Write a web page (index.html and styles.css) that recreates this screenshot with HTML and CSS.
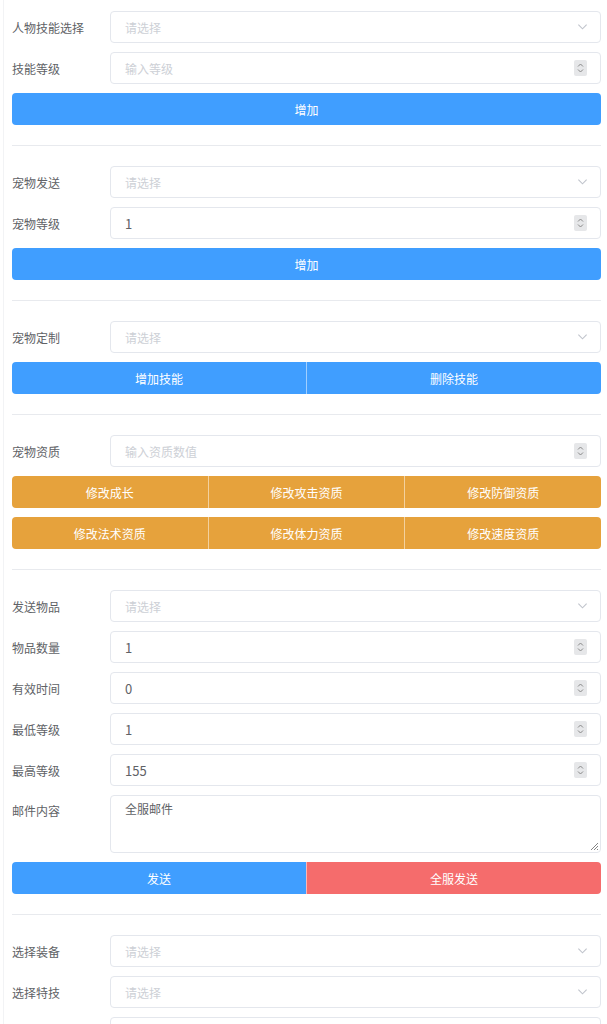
FILE: index.html
```html
<!DOCTYPE html>
<html lang="zh">
<head>
<meta charset="utf-8">
<link rel="stylesheet" href="styles.css">
</head>
<body>
<div class="page">
  <section class="sec">
    <div class="row"><label class="lbl">人物技能选择</label><div class="field select"><span class="ph">请选择</span><svg class="arrow" viewBox="0 0 12 8"><path d="M1.5 1.5 6 6l4.5-4.5" fill="none" stroke="#c0c4cc" stroke-width="1.2"/></svg></div></div>
    <div class="row"><label class="lbl">技能等级</label><div class="field num"><span class="ph">输入等级</span><span class="spin"><svg viewBox="0 0 12 16"><path d="M3.5 6.5 6 4l2.5 2.5M3.5 9.5 6 12l2.5-2.5" fill="none" stroke="#888" stroke-width="1"/></svg></span></div></div>
    <div class="btns"><button class="btn blue">增加</button></div>
  </section>
  <hr class="div">
  <section class="sec">
    <div class="row"><label class="lbl">宠物发送</label><div class="field select"><span class="ph">请选择</span><svg class="arrow" viewBox="0 0 12 8"><path d="M1.5 1.5 6 6l4.5-4.5" fill="none" stroke="#c0c4cc" stroke-width="1.2"/></svg></div></div>
    <div class="row"><label class="lbl">宠物等级</label><div class="field num"><span class="val">1</span><span class="spin"><svg viewBox="0 0 12 16"><path d="M3.5 6.5 6 4l2.5 2.5M3.5 9.5 6 12l2.5-2.5" fill="none" stroke="#888" stroke-width="1"/></svg></span></div></div>
    <div class="btns"><button class="btn blue">增加</button></div>
  </section>
  <hr class="div">
  <section class="sec">
    <div class="row"><label class="lbl">宠物定制</label><div class="field select"><span class="ph">请选择</span><svg class="arrow" viewBox="0 0 12 8"><path d="M1.5 1.5 6 6l4.5-4.5" fill="none" stroke="#c0c4cc" stroke-width="1.2"/></svg></div></div>
    <div class="btns group"><button class="btn blue">增加技能</button><button class="btn blue">删除技能</button></div>
  </section>
  <hr class="div">
  <section class="sec">
    <div class="row"><label class="lbl">宠物资质</label><div class="field num"><span class="ph">输入资质数值</span><span class="spin"><svg viewBox="0 0 12 16"><path d="M3.5 6.5 6 4l2.5 2.5M3.5 9.5 6 12l2.5-2.5" fill="none" stroke="#888" stroke-width="1"/></svg></span></div></div>
    <div class="btns group"><button class="btn orange">修改成长</button><button class="btn orange">修改攻击资质</button><button class="btn orange">修改防御资质</button></div>
    <div class="btns group"><button class="btn orange">修改法术资质</button><button class="btn orange">修改体力资质</button><button class="btn orange">修改速度资质</button></div>
  </section>
  <hr class="div">
  <section class="sec">
    <div class="row"><label class="lbl">发送物品</label><div class="field select"><span class="ph">请选择</span><svg class="arrow" viewBox="0 0 12 8"><path d="M1.5 1.5 6 6l4.5-4.5" fill="none" stroke="#c0c4cc" stroke-width="1.2"/></svg></div></div>
    <div class="row"><label class="lbl">物品数量</label><div class="field num"><span class="val">1</span><span class="spin"><svg viewBox="0 0 12 16"><path d="M3.5 6.5 6 4l2.5 2.5M3.5 9.5 6 12l2.5-2.5" fill="none" stroke="#888" stroke-width="1"/></svg></span></div></div>
    <div class="row"><label class="lbl">有效时间</label><div class="field num"><span class="val">0</span><span class="spin"><svg viewBox="0 0 12 16"><path d="M3.5 6.5 6 4l2.5 2.5M3.5 9.5 6 12l2.5-2.5" fill="none" stroke="#888" stroke-width="1"/></svg></span></div></div>
    <div class="row"><label class="lbl">最低等级</label><div class="field num"><span class="val">1</span><span class="spin"><svg viewBox="0 0 12 16"><path d="M3.5 6.5 6 4l2.5 2.5M3.5 9.5 6 12l2.5-2.5" fill="none" stroke="#888" stroke-width="1"/></svg></span></div></div>
    <div class="row"><label class="lbl">最高等级</label><div class="field num"><span class="val">155</span><span class="spin"><svg viewBox="0 0 12 16"><path d="M3.5 6.5 6 4l2.5 2.5M3.5 9.5 6 12l2.5-2.5" fill="none" stroke="#888" stroke-width="1"/></svg></span></div></div>
    <div class="row top"><label class="lbl">邮件内容</label><div class="field area"><span class="val">全服邮件</span><svg class="grip" viewBox="0 0 10 10"><path d="M9 2 2 9M9 5 5 9M9 8 8 9" stroke="#777" stroke-width="0.9"/></svg></div></div>
    <div class="btns group"><button class="btn blue">发送</button><button class="btn red">全服发送</button></div>
  </section>
  <hr class="div">
  <section class="sec">
    <div class="row"><label class="lbl">选择装备</label><div class="field select"><span class="ph">请选择</span><svg class="arrow" viewBox="0 0 12 8"><path d="M1.5 1.5 6 6l4.5-4.5" fill="none" stroke="#c0c4cc" stroke-width="1.2"/></svg></div></div>
    <div class="row"><label class="lbl">选择特技</label><div class="field select"><span class="ph">请选择</span><svg class="arrow" viewBox="0 0 12 8"><path d="M1.5 1.5 6 6l4.5-4.5" fill="none" stroke="#c0c4cc" stroke-width="1.2"/></svg></div></div>
    <div class="row"><label class="lbl"></label><div class="field select"></div></div>
  </section>
</div>
</body>
</html>
```
FILE: styles.css
```css
html, body {
  margin: 0;
  padding: 0;
  background: #fff;
  height: 1024px;
  overflow: hidden;
}
body {
  font-family: "Noto Sans CJK SC", "Noto Sans", sans-serif;
  font-size: 12px;
  color: #606266;
}
.page {
  margin-left: 3px;
  border-left: 1px solid #f2f3f5;
  padding: 11px 6px 0 8px;
  min-height: 1100px;
}
.sec {
  display: flex;
  flex-direction: column;
  gap: 9px;
}
.row {
  display: flex;
  align-items: center;
}
.row.top {
  align-items: flex-start;
}
.row.top .lbl {
  line-height: 32px;
}
.lbl {
  width: 98px;
  flex: none;
  color: #606266;
  font-size: 12px;
}
.field {
  flex: 1;
  height: 32px;
  box-sizing: border-box;
  border: 1px solid #e4e7ed;
  border-radius: 4px;
  background: #fff;
  display: flex;
  align-items: center;
  padding: 0 14px;
  position: relative;
}
.area {
  height: 58px;
  align-items: flex-start;
  padding-top: 4px;
}
.ph {
  color: #cdd0d6;
  font-size: 12px;
}
.val {
  color: #606266;
  font-size: 13px;
}
.area .val {
  font-size: 12px;
}
.arrow {
  width: 11px;
  height: 8px;
  margin-left: auto;
  margin-right: -2px;
}
.spin {
  margin-left: auto;
  margin-right: -1px;
  width: 13px;
  height: 16px;
  background: #e6e7e9;
  border-radius: 2px;
  display: flex;
}
.spin svg {
  width: 13px;
  height: 16px;
}
.grip {
  position: absolute;
  right: 1px;
  bottom: 1px;
  width: 10px;
  height: 10px;
}
.btns {
  display: flex;
  border-radius: 4px;
  overflow: hidden;
}
.btn {
  flex: 1;
  height: 32px;
  border: 0;
  margin: 0;
  padding: 0;
  font-family: inherit;
  font-size: 12px;
  color: #fff;
}
.group .btn + .btn {
  border-left: 1px solid rgba(255, 255, 255, 0.5);
}
.blue { background: #409eff; }
.orange { background: #e6a23c; }
.red { background: #f56c6c; }
.div {
  border: 0;
  height: 1px;
  background: #e8eaee;
  margin: 20px 0;
}
```
